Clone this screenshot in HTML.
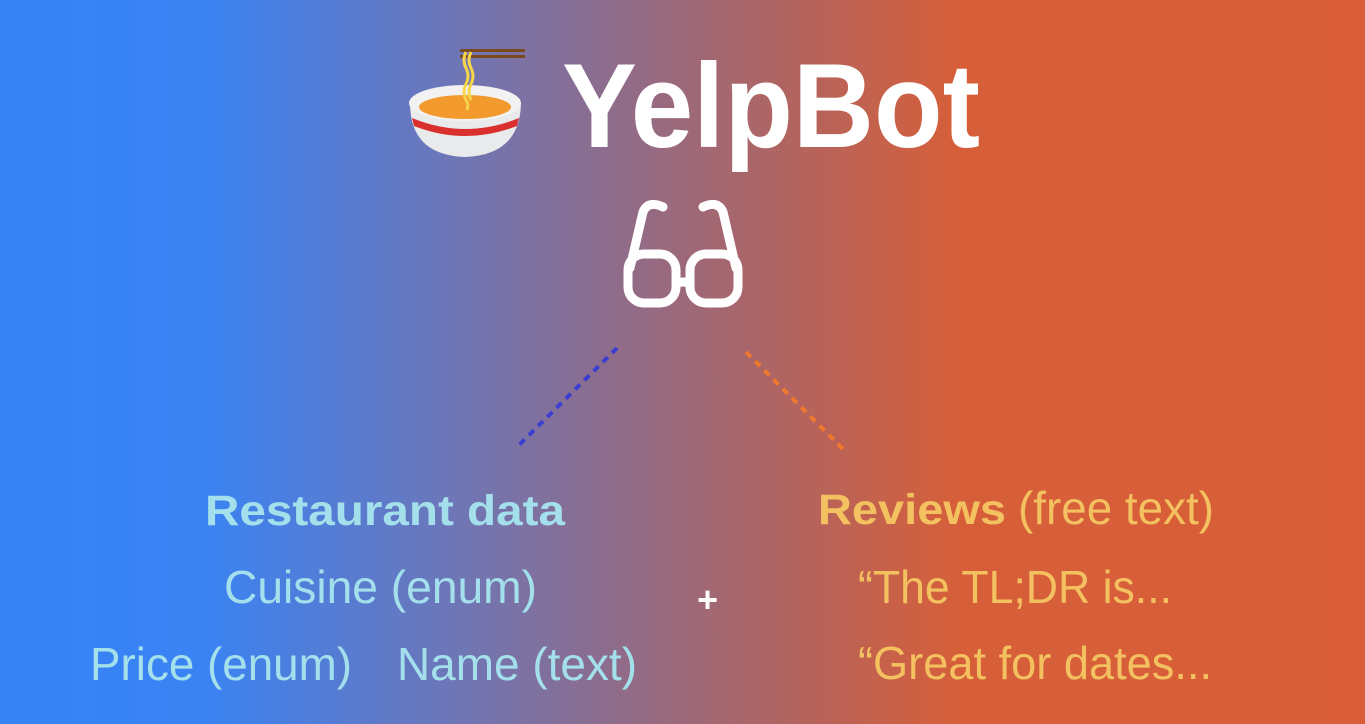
<!DOCTYPE html>
<html><head><meta charset="utf-8"><style>
html,body{margin:0;padding:0;width:1365px;height:724px;overflow:hidden}
body{background:linear-gradient(90deg,#3683f6 0%,#3a83f3 15%,#6a77bb 32%,#8f6c8b 45%,#b2645f 58%,#d65f3a 70%,#d95e37 100%)}
svg{position:absolute;left:0;top:0}
</style></head><body>
<svg width="1365" height="724" viewBox="0 0 1365 724" xmlns="http://www.w3.org/2000/svg">
<g>
<rect x="460" y="49" width="65" height="3" fill="#7a4a1e"/>
<rect x="460" y="55" width="65" height="3" fill="#7a4a1e"/>
<path d="M410 103 Q410 155 465 157 Q520 155 521 103 Z" fill="#e8eaec"/>
<ellipse cx="465" cy="103" rx="56" ry="18" fill="#f2f2f2"/>
<ellipse cx="465" cy="107" rx="46" ry="12" fill="#f29a2e"/>
<path d="M412 118 Q465 140 519 118 L517 126 Q465 146 414 126 Z" fill="#d9302e"/>
<path d="M466 52 q-4 8 0 16 q4 8 0 16 q-4 8 0 16 q3 5 1 10 M471 52 q-4 8 0 16 q4 8 0 16 q-4 8 0 16" stroke="#f6d54a" stroke-width="3" fill="none"/>
</g>
<text x="562" y="147" font-family="Liberation Sans, sans-serif" font-weight="bold" font-size="120" fill="#fff" textLength="418" lengthAdjust="spacingAndGlyphs">YelpBot</text>
<g fill="none" stroke="#fff" stroke-width="9" stroke-linecap="round" stroke-linejoin="round">
<rect x="628" y="254" width="48" height="49" rx="16"/>
<rect x="690" y="254" width="48" height="49" rx="16"/>
<path d="M676 284 Q683 280 690 284"/>
<path d="M663 207 Q648 200 643 212 L630 268"/>
<path d="M703 207 Q718 200 723 212 L736 268"/>
</g>
<line x1="617" y1="348" x2="519" y2="445" stroke="#3a3fd0" stroke-width="4" stroke-dasharray="7 6"/>
<line x1="746" y1="352" x2="843" y2="449" stroke="#f0782e" stroke-width="4" stroke-dasharray="7 6"/>
<g font-family="Liberation Sans, sans-serif" fill="#a4e0ec">
<text x="205" y="525" font-size="43" font-weight="bold" textLength="360" lengthAdjust="spacingAndGlyphs">Restaurant data</text>
<text x="224" y="603" font-size="46" textLength="313" lengthAdjust="spacingAndGlyphs">Cuisine (enum)</text>
<text x="90" y="680" font-size="46" textLength="262" lengthAdjust="spacingAndGlyphs">Price (enum)</text>
<text x="397" y="680" font-size="46" textLength="240" lengthAdjust="spacingAndGlyphs">Name (text)</text>
</g>
<text x="697" y="612" font-family="Liberation Sans, sans-serif" font-weight="bold" font-size="36" fill="#fff">+</text>
<g font-family="Liberation Sans, sans-serif" fill="#f3c15f">
<text x="818" y="524" font-size="43" font-weight="bold" textLength="188" lengthAdjust="spacingAndGlyphs">Reviews</text>
<text x="1018" y="524" font-size="46" textLength="196" lengthAdjust="spacingAndGlyphs">(free text)</text>
<text x="858" y="603" font-size="46" textLength="314" lengthAdjust="spacingAndGlyphs">“The TL;DR is...</text>
<text x="858" y="679" font-size="46" textLength="354" lengthAdjust="spacingAndGlyphs">“Great for dates...</text>
</g>
</svg>
</body></html>
